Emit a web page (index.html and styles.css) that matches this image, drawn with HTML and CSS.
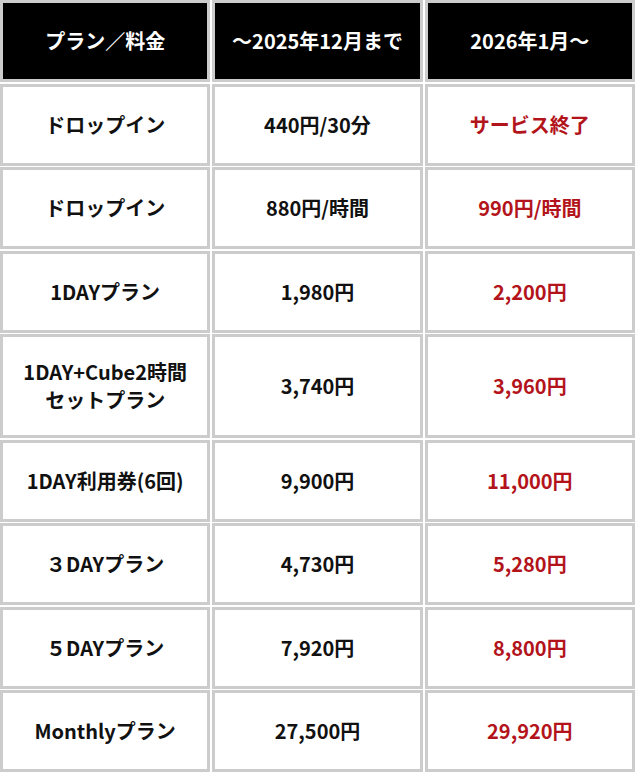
FILE: index.html
```html
<!DOCTYPE html>
<html lang="ja">
<head>
<meta charset="utf-8">
<link rel="stylesheet" href="styles.css">
</head>
<body>
<div class="price-table">
  <div class="cell head">プラン／料金</div>
  <div class="cell head">〜2025年12月まで</div>
  <div class="cell head">2026年1月〜</div>

  <div class="cell">ドロップイン</div>
  <div class="cell">440円/30分</div>
  <div class="cell new">サービス終了</div>

  <div class="cell">ドロップイン</div>
  <div class="cell">880円/時間</div>
  <div class="cell new">990円/時間</div>

  <div class="cell">1DAYプラン</div>
  <div class="cell">1,980円</div>
  <div class="cell new">2,200円</div>

  <div class="cell">1DAY+Cube2時間<br>セットプラン</div>
  <div class="cell">3,740円</div>
  <div class="cell new">3,960円</div>

  <div class="cell">1DAY利用券(6回)</div>
  <div class="cell">9,900円</div>
  <div class="cell new">11,000円</div>

  <div class="cell">３DAYプラン</div>
  <div class="cell">4,730円</div>
  <div class="cell new">5,280円</div>

  <div class="cell">５DAYプラン</div>
  <div class="cell">7,920円</div>
  <div class="cell new">8,800円</div>

  <div class="cell">Monthlyプラン</div>
  <div class="cell">27,500円</div>
  <div class="cell new">29,920円</div>
</div>
</body>
</html>
```

FILE: styles.css
```css
html, body {
  margin: 0;
  padding: 0;
  background: #fff;
}

body {
  width: 635px;
  font-family: "Noto Sans CJK JP", "Noto Sans", sans-serif;
  font-weight: 700;
  font-size: 20px;
  color: #111;
}

.price-table {
  display: grid;
  grid-template-columns: repeat(3, 1fr);
  column-gap: 2px;
  row-gap: 1.5px;
}

.cell {
  box-sizing: border-box;
  min-height: 82px;
  border: 3px solid #cccccc;
  background: #fff;
  display: flex;
  align-items: center;
  justify-content: center;
  text-align: center;
  line-height: 28px;
  padding: 21px 4px;
}

.head {
  background: #000;
  color: #fff;
}

.new {
  color: #b3141b;
}
```
